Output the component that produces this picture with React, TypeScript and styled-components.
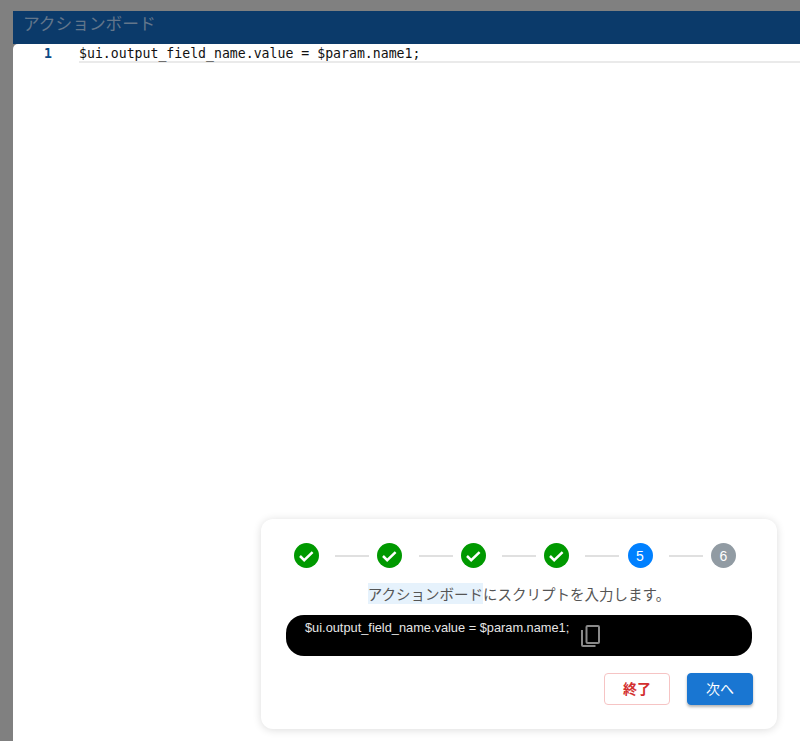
import React from 'react';
import styled, { createGlobalStyle } from 'styled-components';

const GlobalStyle = createGlobalStyle`
  html, body {
    margin: 0;
    padding: 0;
    background: #808080;
  }
`;

const Page = styled.div`
  position: relative;
  width: 800px;
  height: 741px;
  overflow: hidden;
  padding: 11px 0 0 13px;
  box-sizing: border-box;
  background: #808080;
  font-family: 'Noto Sans CJK JP', 'Liberation Sans', sans-serif;
`;

const Dialog = styled.div`
  height: 730px;
  display: flex;
  flex-direction: column;
`;

const DialogHeader = styled.div`
  height: 33px;
  flex: none;
  padding-left: 10px;
  background: #0b3a6a;
  color: #63768b;
  font-size: 16.7px;
  line-height: 25px;
`;

const Editor = styled.div`
  flex: 1;
  background: #fff;
  border-top-left-radius: 5px;
`;

const CodeRow = styled.div`
  display: flex;
  height: 19px;
  font-family: 'DejaVu Sans Mono', monospace;
  font-size: 13.2px;
  line-height: 19px;
`;

const LineNumber = styled.div`
  width: 39px;
  padding-right: 27px;
  flex: none;
  text-align: right;
  color: #0b4a86;
  font-weight: 700;
`;

const CodeLine = styled.div`
  flex: 1;
  color: #111;
  border-bottom: 2px solid #eaeaea;
  white-space: pre;
`;

const TourCard = styled.div`
  position: absolute;
  left: 261px;
  top: 519px;
  width: 516px;
  height: 210px;
  box-sizing: border-box;
  padding: 24px 25px 0;
  border-radius: 12px;
  background: #fff;
  box-shadow: 0 1px 8px rgba(0, 0, 0, 0.14);
`;

const Stepper = styled.div`
  display: flex;
  align-items: center;
  justify-content: space-between;
  padding: 0 16px 0 8px;
`;

const StepDot = styled.div<{ $tone: string }>`
  width: 25px;
  height: 25px;
  flex: none;
  display: flex;
  align-items: center;
  justify-content: center;
  border-radius: 50%;
  background: ${(p) => p.$tone};
  color: #fff;
  font-family: 'Liberation Sans', sans-serif;
  font-size: 14px;
`;

const StepLine = styled.div`
  width: 34px;
  height: 2px;
  margin: 0 8px 0 16px;
  flex: none;
  background: #e0e0e0;
`;

const Message = styled.div`
  margin-top: 15px;
  height: 22px;
  text-align: center;
  font-size: 14.5px;
  line-height: 21px;
  color: #555;
`;

const Highlight = styled.span`
  background: #e6f2fc;
`;

const CodeBox = styled.div`
  margin-top: 10px;
  height: 41px;
  display: flex;
  align-items: flex-start;
  padding-left: 19px;
  border-radius: 18px;
  background: #000;
  color: #e6e6e6;
  font-family: 'Liberation Sans', sans-serif;
  font-size: 12.8px;
  line-height: 25px;
`;

const CopyGlyph = styled.svg`
  width: 19px;
  height: 22px;
  margin: 10px 0 0 12px;
  flex: none;
  fill: none;
  stroke: #8a8a8a;
  stroke-width: 2;
`;

const Actions = styled.div`
  display: flex;
  justify-content: flex-end;
  gap: 17px;
  margin: 17px -1px 0 0;
`;

const Button = styled.button<{ $primary?: boolean }>`
  width: 66px;
  height: 32px;
  padding: 0 0 3px;
  box-sizing: border-box;
  border-radius: 4px;
  font-family: inherit;
  font-size: 14px;
  font-weight: ${(p) => (p.$primary ? 400 : 700)};
  border: 1px solid ${(p) => (p.$primary ? '#1976d2' : '#f6c4c4')};
  background: ${(p) => (p.$primary ? '#1976d2' : '#fff')};
  color: ${(p) => (p.$primary ? '#fff' : '#d32f2f')};
  box-shadow: ${(p) => (p.$primary ? '0 2px 3px rgba(0,0,0,0.3)' : 'none')};
`;

const steps = [1, 2, 3, 4, 5, 6];

const stepTone = (step: number) => {
  if (step < 5) return '#009900';
  if (step === 5) return '#0080ff';
  return '#919ba3';
};

const CheckMark = () => (
  <svg width="25" height="25" viewBox="0 0 25 25" fill="none">
    <path d="M6 13l4.2 4.2L18.6 9.2" stroke="#fff" strokeWidth="2.5" />
  </svg>
);

const App = () => {
  return (
    <Page>
      <GlobalStyle />
      <Dialog>
        <DialogHeader>アクションボード</DialogHeader>
        <Editor>
          <CodeRow>
            <LineNumber>1</LineNumber>
            <CodeLine>$ui.output_field_name.value = $param.name1;</CodeLine>
          </CodeRow>
        </Editor>
      </Dialog>
      <TourCard>
        <Stepper>
          {steps.map((step) => (
            <React.Fragment key={step}>
              <StepDot $tone={stepTone(step)}>
                {step < 5 ? <CheckMark /> : step}
              </StepDot>
              {step < 6 && <StepLine />}
            </React.Fragment>
          ))}
        </Stepper>
        <Message>
          <Highlight>アクションボード</Highlight>にスクリプトを入力します。
        </Message>
        <CodeBox>
          $ui.output_field_name.value = $param.name1;
          <CopyGlyph viewBox="0 0 19 22">
            <rect x="5.5" y="1" width="12.5" height="17" rx="1" />
            <path d="M1 5v15a1 1 0 0 0 1 1h12.5" />
          </CopyGlyph>
        </CodeBox>
        <Actions>
          <Button>終了</Button>
          <Button $primary>次へ</Button>
        </Actions>
      </TourCard>
    </Page>
  );
};

export default App;
